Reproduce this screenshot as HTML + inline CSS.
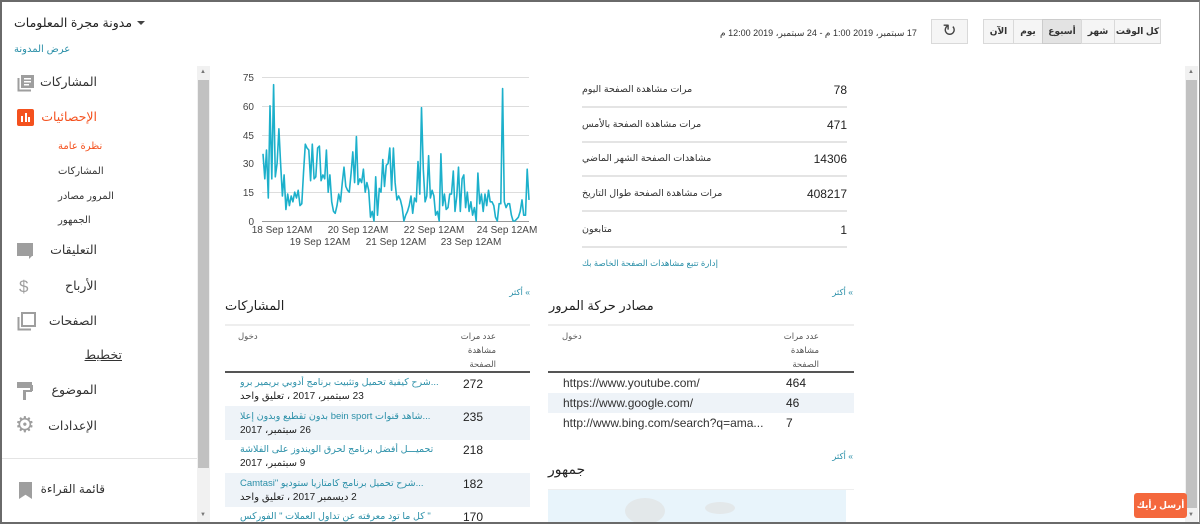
<!DOCTYPE html>
<html><head><meta charset="utf-8">
<style>
*{margin:0;padding:0;box-sizing:border-box}
body{width:1200px;height:524px;overflow:hidden;background:#fff;font-family:"Liberation Sans","DejaVu Sans",sans-serif;color:#222;position:relative}
.a{position:absolute;white-space:nowrap}
.r{direction:rtl;text-align:right}
.frame{position:absolute;left:0;top:0;width:1200px;height:524px;border:2px solid #6a6a6a;border-right:1px solid #888}
.nav{font-size:12px;color:#333}
.sub{font-size:10px;color:#333}
.ic{position:absolute;left:17px;width:16px;height:16px;background:#9e9e9e}
.btn{position:absolute;top:19px;height:25px;border:1px solid #d9d9d9;background:#f5f5f5;font-size:9px;font-weight:bold;color:#333;text-align:center;line-height:23px}
.sb{position:absolute;background:#c1c1c1}
.sbt{position:absolute;background:#f1f1f1}
.link{color:#2a8fa8}
.num{font-size:12px;color:#222}
.sep{position:absolute;height:2px;background:#e4e4e4}
.lbl{font-size:9.5px;color:#333;direction:rtl}
.pt{position:absolute;left:240px;width:210px;direction:rtl;text-align:left;white-space:nowrap;overflow:hidden;font-size:9.5px;height:14px;line-height:14px}
.pd{position:absolute;left:240px;width:210px;direction:rtl;text-align:left;white-space:nowrap;font-size:10px;height:14px;line-height:14px}
</style></head><body>

<!-- top bar -->
<div class="a r" style="left:14px;top:15px;font-size:12.5px;color:#222">مدونة مجرة المعلومات</div>
<div class="a" style="left:137px;top:21px;width:0;height:0;border-left:4px solid transparent;border-right:4px solid transparent;border-top:4px solid #444"></div>
<div class="a r link" style="left:14px;top:44px;font-size:10px">عرض المدونة</div>

<div class="a" style="left:720px;top:28px;font-size:9px;color:#333;direction:rtl">17 سبتمبر، 2019 1:00 م - 24 سبتمبر، 2019 12:00 م</div>
<div class="btn" style="left:931px;width:37px;font-size:17px;font-weight:normal;line-height:22px;color:#444">&#x21bb;</div>
<div class="btn" style="left:983px;width:31px">الآن</div>
<div class="btn" style="left:1013px;width:30px">يوم</div>
<div class="btn" style="left:1042px;width:40px;background:#e3e3e3;border-color:#ccc">أسبوع</div>
<div class="btn" style="left:1081px;width:34px">شهر</div>
<div class="btn" style="left:1114px;width:47px">كل الوقت</div>

<!-- sidebar -->
<div class="sbt" style="left:197px;top:66px;width:13px;height:456px"></div>
<div class="sb" style="left:198px;top:80px;width:11px;height:388px"></div>
<div class="a" style="left:200px;top:69px;font-size:6px;color:#777">▲</div>
<div class="a" style="left:200px;top:512px;font-size:6px;color:#777">▼</div>

<div class="ic" style="top:74px;background:none"><svg width="18" height="18" viewBox="0 0 18 18"><rect x="4" y="1" width="13" height="13" fill="#9e9e9e"/><rect x="7" y="4" width="7" height="1.5" fill="#fff"/><rect x="7" y="7" width="7" height="1.5" fill="#fff"/><rect x="7" y="10" width="5" height="1.5" fill="#fff"/><path d="M1.5 4v12.5H14" stroke="#9e9e9e" stroke-width="2" fill="none"/></svg></div>
<div class="a r nav" style="right:1103px;top:74px;font-size:12.5px">المشاركات</div>
<div class="ic" style="top:109px;background:#f4511e;border-radius:2px;width:17px;height:17px"><div style="position:absolute;left:4px;top:7px;width:2px;height:6px;background:#fff"></div><div style="position:absolute;left:7.5px;top:4px;width:2px;height:9px;background:#fff"></div><div style="position:absolute;left:11px;top:8px;width:2px;height:5px;background:#fff"></div></div>
<div class="a r nav" style="right:1103px;top:109px;font-size:12.5px;color:#f4511e">الإحصائيات</div>
<div class="a r sub" style="left:58px;top:141px;color:#f4511e">نظرة عامة</div>
<div class="a r sub" style="left:58px;top:166px">المشاركات</div>
<div class="a r sub" style="left:58px;top:191px">المرور مصادر</div>
<div class="a r sub" style="left:58px;top:215px">الجمهور</div>
<div class="ic" style="top:243px;height:13px"></div><div class="a" style="left:29px;top:255px;width:0;height:0;border-left:4px solid #9e9e9e;border-bottom:4px solid transparent"></div>
<div class="a r nav" style="right:1103px;top:242px;font-size:12.5px">التعليقات</div>
<div class="a" style="left:19px;top:277px;font-size:17px;color:#9e9e9e">$</div>
<div class="a r nav" style="right:1103px;top:278px;font-size:12.5px">الأرباح</div>
<div class="ic" style="top:312px;background:none"><svg width="20" height="20" viewBox="0 0 20 20"><rect x="5" y="1" width="13" height="13" fill="none" stroke="#9e9e9e" stroke-width="2"/><path d="M1.5 5v12.5H14" stroke="#9e9e9e" stroke-width="2" fill="none"/></svg></div>
<div class="a r nav" style="right:1103px;top:313px;font-size:12.5px">الصفحات</div>
<div class="a r nav" style="right:1078px;top:347px;font-size:12.5px;text-decoration:underline">تخطيط</div>
<div class="ic" style="top:382px;background:none"><svg width="18" height="18" viewBox="0 0 18 18"><rect x="0" y="0" width="15" height="6" fill="#9e9e9e"/><rect x="13" y="3" width="3" height="6" fill="#9e9e9e"/><rect x="6" y="8" width="9" height="2" fill="#9e9e9e"/><rect x="6" y="9" width="3" height="9" fill="#9e9e9e"/></svg></div>
<div class="a r nav" style="right:1103px;top:382px;font-size:12.5px">الموضوع</div>
<div class="a" style="left:15px;top:413px;font-size:22px;color:#9e9e9e;line-height:24px">⚙</div>
<div class="a r nav" style="right:1103px;top:418px;font-size:12.5px">الإعدادات</div>
<div class="a" style="left:0;top:458px;width:197px;height:1px;background:#e4e4e4"></div>
<div class="a" style="left:19px;top:482px;width:13px;height:17px;background:#9e9e9e;clip-path:polygon(0 0,100% 0,100% 100%,50% 75%,0 100%)"></div>
<div class="a r nav" style="right:1095px;top:482px;font-size:12px">قائمة القراءة</div>

<!-- main scrollbar -->
<div class="sbt" style="left:1185px;top:66px;width:13px;height:456px"></div>
<div class="sb" style="left:1186px;top:80px;width:11px;height:428px"></div>
<div class="a" style="left:1188px;top:69px;font-size:6px;color:#777">▲</div>
<div class="a" style="left:1188px;top:512px;font-size:6px;color:#777">▼</div>

<!-- chart -->
<svg class="a" style="left:220px;top:60px" width="330" height="190" viewBox="220 60 330 190">
<g stroke="#ddd" stroke-width="1">
<line x1="262" y1="77.5" x2="529" y2="77.5"/><line x1="262" y1="106.5" x2="529" y2="106.5"/><line x1="262" y1="135.5" x2="529" y2="135.5"/><line x1="262" y1="163.5" x2="529" y2="163.5"/><line x1="262" y1="192.5" x2="529" y2="192.5"/><line x1="262" y1="221.5" x2="529" y2="221.5" stroke="#999"/>
</g>
<g font-family="Liberation Sans" font-size="10" fill="#444" text-anchor="end">
<text x="254" y="81">75</text><text x="254" y="110">60</text><text x="254" y="139">45</text><text x="254" y="167">30</text><text x="254" y="196">15</text><text x="254" y="225">0</text>
</g>
<g font-family="Liberation Sans" font-size="10" fill="#444" text-anchor="middle">
<text x="282" y="233">18 Sep 12AM</text><text x="358" y="233">20 Sep 12AM</text><text x="434" y="233">22 Sep 12AM</text><text x="507" y="233">24 Sep 12AM</text>
<text x="320" y="245">19 Sep 12AM</text><text x="396" y="245">21 Sep 12AM</text><text x="471" y="245">23 Sep 12AM</text>
</g>
<polyline id="pl" fill="none" stroke="#1cb0cb" stroke-width="1.6" stroke-linejoin="round" points=""/>
</svg>
<script>
var v=[35,22,37,12,60,22,71,23,30,48,30,13,24,6,14,8,13,10,15,12,16,8,9,25,40,38,37,21,40,22,23,38,39,21,24,22,37,15,24,10,5,4,8,14,10,20,28,18,16,15,25,36,20,44,19,22,20,27,15,20,16,2,5,0,23,3,17,15,32,18,29,30,38,16,38,20,11,13,11,7,0,3,5,8,13,4,12,10,31,14,59,27,10,13,34,12,16,13,3,5,0,35,8,14,6,7,14,14,26,5,13,28,5,22,24,7,15,5,10,3,7,0,25,9,14,5,14,8,16,10,10,8,2,0,9,9,69,10,7,9,9,3,0,0,1,2,5,11,3,3,27,11];
var p=[];for(var i=0;i<v.length;i++){p.push((263+i*(266/(v.length-1))).toFixed(1)+","+(221-v[i]*144/75).toFixed(1));}
document.getElementById("pl").setAttribute("points",p.join(" "));
</script>

<!-- stats -->
<div class="a lbl" style="left:582px;top:84px">مرات مشاهدة الصفحة اليوم</div><div class="a num" style="right:353px;top:83px">78</div>
<div class="sep" style="left:582px;top:106px;width:265px"></div>
<div class="a lbl" style="left:582px;top:119px">مرات مشاهدة الصفحة بالأمس</div><div class="a num" style="right:353px;top:118px">471</div>
<div class="sep" style="left:582px;top:141px;width:265px"></div>
<div class="a lbl" style="left:582px;top:153px">مشاهدات الصفحة الشهر الماضي</div><div class="a num" style="right:353px;top:152px">14306</div>
<div class="sep" style="left:582px;top:175px;width:265px"></div>
<div class="a lbl" style="left:582px;top:188px">مرات مشاهدة الصفحة طوال التاريخ</div><div class="a num" style="right:353px;top:187px">408217</div>
<div class="sep" style="left:582px;top:210px;width:265px"></div>
<div class="a lbl" style="left:582px;top:224px">متابعون</div><div class="a num link" style="right:353px;top:223px">1</div>
<div class="sep" style="left:582px;top:246px;width:265px"></div>
<div class="a link" style="left:582px;top:258px;font-size:8.5px;direction:rtl">إدارة تتبع مشاهدات الصفحة الخاصة بك</div>

<!-- posts table -->
<div class="a r link" style="right:670px;top:287px;font-size:8.5px">» أكثر</div>
<div class="a r" style="left:225px;top:298px;font-size:13px">المشاركات</div>
<div class="a" style="left:225px;top:324px;width:305px;height:2px;background:#eee"></div>
<div class="a r" style="left:238px;top:331px;font-size:8.5px;color:#555">دخول</div>
<div class="a" style="left:460px;top:329px;font-size:8.5px;color:#555;line-height:14px;direction:rtl;text-align:right;white-space:normal;width:36px">عدد مرات مشاهدة الصفحة</div>
<div class="a" style="left:225px;top:371px;width:305px;height:2px;background:#555"></div>
<div class="a" style="left:225px;top:406px;width:305px;height:34px;background:#eef3f8"></div>
<div class="a" style="left:225px;top:473px;width:305px;height:34px;background:#eef3f8"></div>
<div class="pt link" style="top:376px">...شرح كيفية تحميل وتثبيت برنامج أدوبي بريمير برو</div>
<div class="pd" style="top:390px">23 سبتمبر، 2017 ، تعليق واحد</div>
<div class="a num" style="left:463px;top:377px">272</div>
<div class="pt link" style="top:410px">...شاهد قنوات bein sport بدون تقطيع وبدون إعلا</div>
<div class="pd" style="top:424px">26 سبتمبر، 2017</div>
<div class="a num" style="left:463px;top:410px">235</div>
<div class="pt link" style="top:443px">تحميـــل أفضل برنامج لحرق الويندوز على الفلاشة</div>
<div class="pd" style="top:457px">9 سبتمبر، 2017</div>
<div class="a num" style="left:463px;top:443px">218</div>
<div class="pt link" style="top:477px">...شرح تحميل برنامج كامتازيا ستوديو "Camtasi</div>
<div class="pd" style="top:491px">2 ديسمبر 2017 ، تعليق واحد</div>
<div class="a num" style="left:463px;top:477px">182</div>
<div class="pt link" style="top:510px">" كل ما تود معرفته عن تداول العملات " الفوركس</div>
<div class="a num" style="left:463px;top:510px">170</div>

<!-- traffic table -->
<div class="a r link" style="right:347px;top:287px;font-size:8.5px">» أكثر</div>
<div class="a r" style="left:549px;top:298px;font-size:13px">مصادر حركة المرور</div>
<div class="a" style="left:548px;top:324px;width:306px;height:2px;background:#eee"></div>
<div class="a" style="left:562px;top:331px;font-size:8.5px;color:#555">دخول</div>
<div class="a" style="left:783px;top:329px;font-size:8.5px;color:#555;line-height:14px;direction:rtl;text-align:right;white-space:normal;width:36px">عدد مرات مشاهدة الصفحة</div>
<div class="a" style="left:548px;top:371px;width:306px;height:2px;background:#555"></div>
<div class="a" style="left:548px;top:393px;width:306px;height:20px;background:#eef3f8"></div>
<div class="a" style="left:563px;top:376px;font-size:12px;color:#333">https://www.youtube.com/</div><div class="a num" style="left:786px;top:376px">464</div>
<div class="a" style="left:563px;top:396px;font-size:12px;color:#333">https://www.google.com/</div><div class="a num" style="left:786px;top:396px">46</div>
<div class="a" style="left:563px;top:416px;font-size:12px;color:#333">http://www.bing.com/search?q=ama...</div><div class="a num" style="left:786px;top:416px">7</div>

<div class="a r link" style="right:347px;top:451px;font-size:8.5px">» أكثر</div>
<div class="a r" style="left:548px;top:461px;font-size:14px">جمهور</div>
<div class="a" style="left:548px;top:489px;width:306px;height:1px;background:#eee"></div>
<div class="a" style="left:548px;top:490px;width:298px;height:34px;background:#e8f4fb"></div>
<div class="a" style="left:625px;top:498px;width:40px;height:26px;border-radius:50%;background:#e3e8ea"></div>
<div class="a" style="left:705px;top:502px;width:30px;height:12px;border-radius:50%;background:#e3e8ea"></div>

<!-- feedback button -->
<div class="a" style="left:1134px;top:493px;width:53px;height:25px;background:#f4683d;border-radius:3px;color:#fff;font-size:9px;font-weight:bold;text-align:center;line-height:25px;direction:rtl">أرسل رأيك</div>

<div class="frame"></div>
</body></html>
